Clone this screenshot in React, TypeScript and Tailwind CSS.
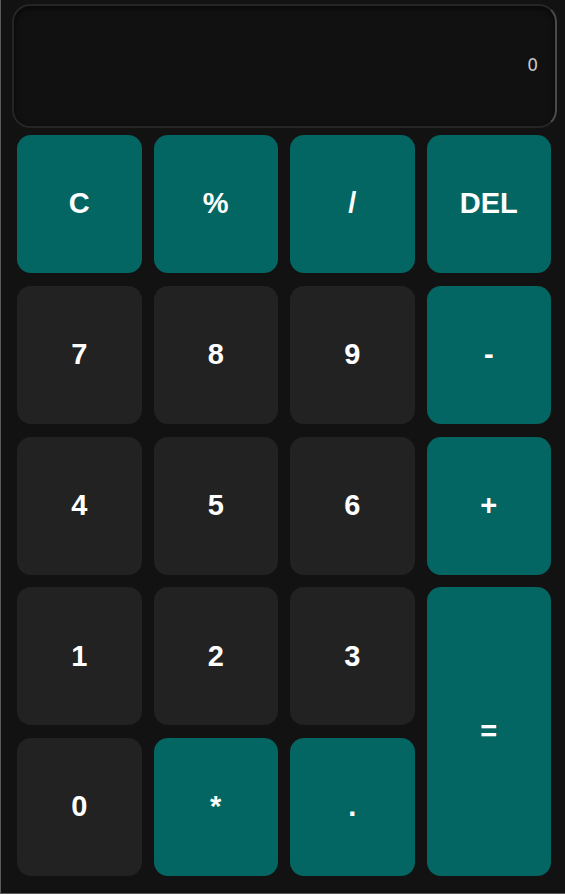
const keys: { label: string; kind: "op" | "num"; tall?: boolean }[] = [
  { label: "C", kind: "op" },
  { label: "%", kind: "op" },
  { label: "/", kind: "op" },
  { label: "DEL", kind: "op" },
  { label: "7", kind: "num" },
  { label: "8", kind: "num" },
  { label: "9", kind: "num" },
  { label: "-", kind: "op" },
  { label: "4", kind: "num" },
  { label: "5", kind: "num" },
  { label: "6", kind: "num" },
  { label: "+", kind: "op" },
  { label: "1", kind: "num" },
  { label: "2", kind: "num" },
  { label: "3", kind: "num" },
  { label: "=", kind: "op", tall: true },
  { label: "0", kind: "num" },
  { label: "*", kind: "op" },
  { label: ".", kind: "op" },
];

export default function App() {
  return (
    <div
      className="w-[565px] h-[894px] bg-[#121212] border-l border-b border-[#5a5a5a] flex flex-col"
      style={{ fontFamily: '"Liberation Sans", Arial, sans-serif' }}
    >
      {/* Display */}
      <div className="pl-[11px] pr-[8px] pt-[4px]">
        <div className="h-[124px] rounded-[18px] bg-[#111111] border-2 border-[#252525] border-r-[#4a4a4a] shadow-[inset_0_2px_6px_rgba(0,0,0,0.6)] flex items-center justify-end pr-[17px]">
          <span className="text-[17px] text-[#c8c8c8]" style={{ fontFamily: '"DejaVu Sans", sans-serif' }}>
            0
          </span>
        </div>
      </div>

      {/* Keypad */}
      <div className="grid grid-cols-4 gap-x-3 gap-y-[12.75px] grid-rows-[repeat(5,138px)] pl-[16px] pr-[14px] mt-[7px]">
        {keys.map((k) => (
          <button
            key={k.label}
            className={`rounded-[14px] text-white font-bold text-[29px] flex items-center justify-center ${
              k.kind === "op" ? "bg-[#046663]" : "bg-[#222222]"
            } ${k.tall ? "row-span-2" : ""}`}
          >
            {k.label}
          </button>
        ))}
      </div>
    </div>
  );
}
